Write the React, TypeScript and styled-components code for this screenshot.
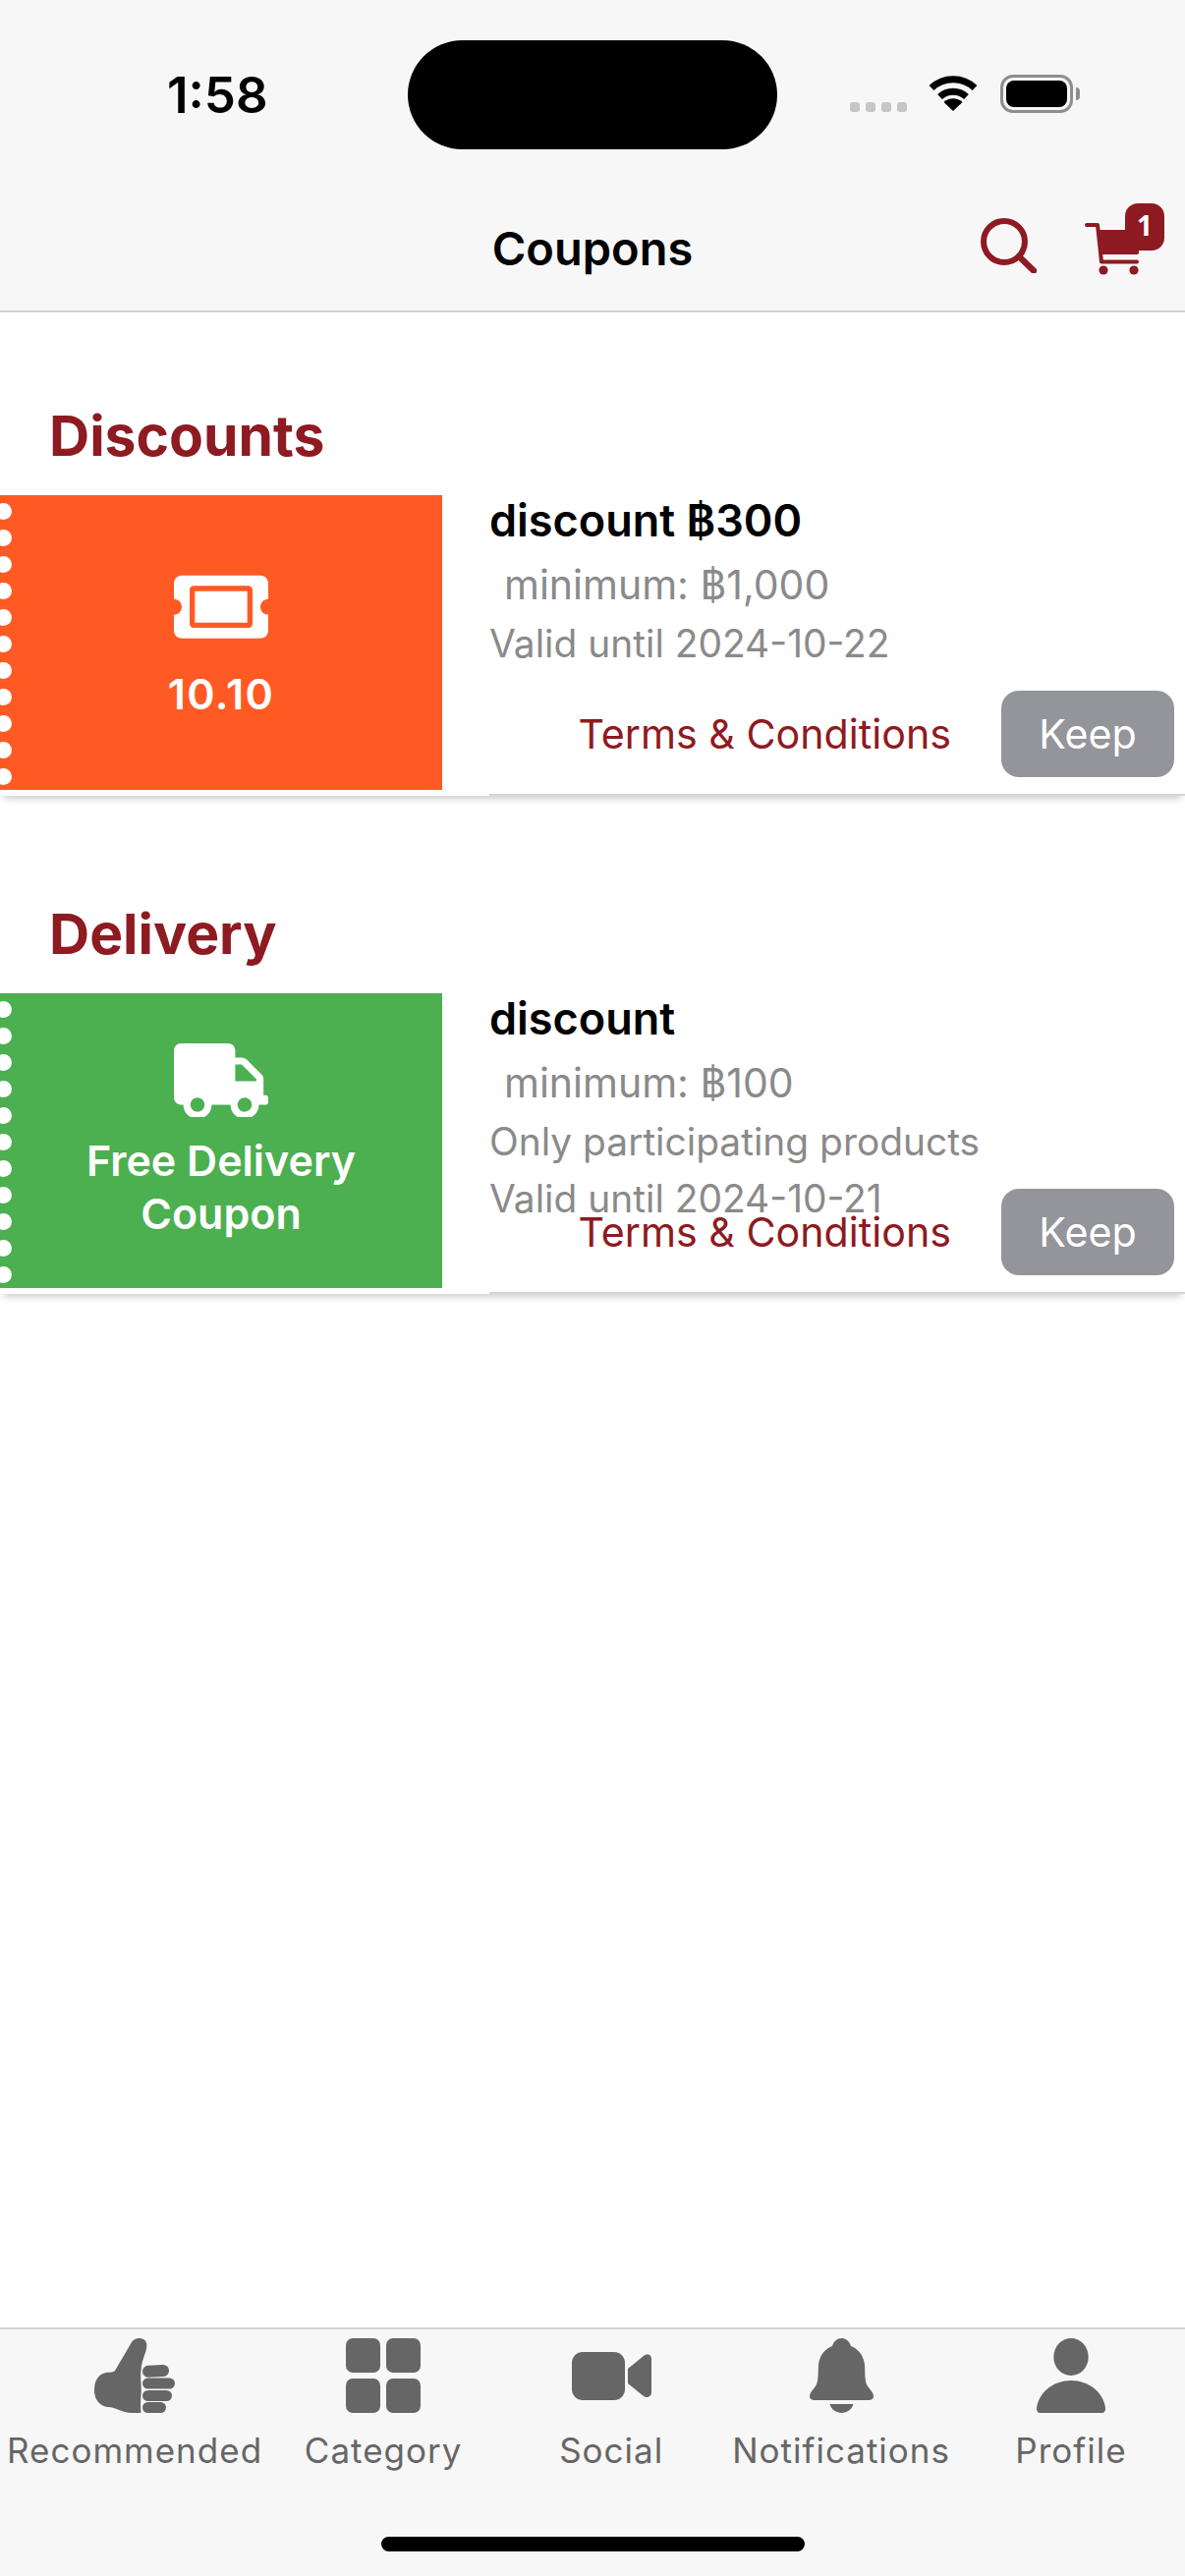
import React from "react";
import styled, { createGlobalStyle } from "styled-components";
import { FaTicketAlt, FaTruck } from "react-icons/fa";

const RED = "#8e1a22";
const GREY = "#8a8a8a";
const ICON = "#666666";

const GlobalStyle = createGlobalStyle`
	html, body {
		margin: 0;
		padding: 0;
		background: #ffffff;
		font-family: Inter, "Liberation Sans", sans-serif;
	}
	* {
		box-sizing: border-box;
	}
`;

const Page = styled.div`
	width: 1206px;
	height: 2622px;
	display: flex;
	flex-direction: column;
	overflow: hidden;
`;

const Header = styled.header`
	background: #f7f7f7;
	border-bottom: 2px solid #d2d2d2;
	height: 318px;
`;

const StatusBar = styled.div`
	height: 190px;
	display: grid;
	grid-template-columns: 415px 376px 415px;
	padding-top: 41px;
`;

const Time = styled.div`
	padding-left: 170px;
	padding-top: 26px;
	font-size: 51px;
	line-height: 60px;
	font-weight: 600;
	color: #000;
`;

const Island = styled.div`
	height: 111px;
	background: #000;
	border-radius: 56px;
`;

const StatusIcons = styled.div`
	display: flex;
	align-items: flex-start;
	padding: 35px 0 0 74px;
`;

const SignalDots = styled.div`
	display: flex;
	gap: 6px;
	margin: 28px 22px 0 0;
`;

const SignalDot = styled.span`
	width: 10px;
	height: 10px;
	border-radius: 3px;
	background: #c6c6c6;
`;

const Battery = styled.div`
	position: relative;
	width: 74px;
	height: 39px;
	margin-left: 23px;
	padding: 3px;
	border: 3px solid #8e8e8e;
	border-radius: 13px;
	&::before {
		content: "";
		display: block;
		height: 27px;
		background: #000;
		border-radius: 8px;
	}
	&::after {
		content: "";
		position: absolute;
		right: -10px;
		top: 10px;
		width: 4px;
		height: 13px;
		background: #8e8e8e;
		border-radius: 0 4px 4px 0;
	}
`;

const NavBar = styled.div`
	height: 126px;
	display: grid;
	grid-template-columns: 1fr auto 1fr;
`;

const NavTitle = styled.div`
	grid-column: 2;
	padding-top: 34px;
	font-size: 47px;
	line-height: 58px;
	font-weight: 600;
	color: #000;
`;

const NavActions = styled.div`
	display: flex;
	justify-content: flex-end;
	padding: 32px 47px 0 0;
	gap: 49px;
`;

const CartButton = styled.div`
	position: relative;
	width: 55px;
	height: 53px;
	margin-top: 5px;
`;

const CartBadge = styled.span`
	position: absolute;
	left: 41px;
	top: -20px;
	width: 40px;
	height: 48px;
	border-radius: 13px;
	background: ${RED};
	color: #fff;
	font-family: "Open Sans", sans-serif;
	font-size: 28px;
	font-weight: 700;
	line-height: 44px;
	text-align: center;
`;

const Content = styled.main`
	flex: 1;
	display: flex;
	flex-direction: column;
	gap: 106px;
	padding-top: 91px;
	background: #fff;
`;

const SectionTitle = styled.h2`
	margin: 0 0 19px 50px;
	font-size: 57px;
	line-height: 70px;
	font-weight: 700;
	color: ${RED};
`;

const Card = styled.div`
	position: relative;
	height: 312px;
	display: flex;
	background: #fff;
	box-shadow: 0 7px 7px -4px rgba(0, 0, 0, 0.2);
`;

const Tile = styled.div<{ $color: string; $top: number; $gap: number }>`
	position: relative;
	flex: none;
	width: 450px;
	height: 300px;
	margin: 6px 48px 6px 0;
	padding-top: ${(p) => p.$top}px;
	overflow: hidden;
	display: flex;
	flex-direction: column;
	align-items: center;
	gap: ${(p) => p.$gap}px;
	background: ${(p) => p.$color};
	color: #fff;
`;

const Perforation = styled.div`
	position: absolute;
	left: -5px;
	top: 8px;
	display: flex;
	flex-direction: column;
	gap: 10px;
`;

const Hole = styled.span`
	width: 17px;
	height: 17px;
	border-radius: 50%;
	background: #fff;
`;

const TileIcon = styled.div<{ $glyphHeight: number }>`
	width: 96px;
	height: 75px;
	overflow: hidden;
	flex: none;
	svg {
		display: block;
		width: 96px;
		height: ${(p) => p.$glyphHeight}px;
	}
`;

const TileLabel = styled.div<{ $spacing: number }>`
	width: 340px;
	font-size: 43px;
	line-height: 54px;
	font-weight: 600;
	text-align: center;
	letter-spacing: ${(p) => p.$spacing}px;
`;

const CardBody = styled.div`
	flex: 1;
	padding-top: 1px;
	border-bottom: 2px solid #d4d4d4;
`;

const CouponTitle = styled.div`
	margin-bottom: 5px;
	font-size: 45px;
	line-height: 61px;
	font-weight: 600;
	color: #000;
`;

const CouponMinimum = styled.div`
	padding-left: 15px;
	font-size: 41px;
	line-height: 61px;
	color: ${GREY};
`;

const CouponNote = styled.div`
	font-size: 38.9px;
	line-height: 58px;
	color: ${GREY};
`;

const CardActions = styled.div`
	position: absolute;
	right: 11px;
	bottom: 19px;
	display: flex;
	align-items: center;
	gap: 51px;
`;

const TermsLink = styled.span`
	font-size: 41.2px;
	line-height: 50px;
	color: ${RED};
`;

const KeepButton = styled.button`
	width: 176px;
	height: 88px;
	border: 0;
	border-radius: 18px;
	background: #93959b;
	color: #fff;
	font-family: inherit;
	font-size: 41.2px;
	padding: 0;
`;

const TabBar = styled.nav`
	height: 253px;
	background: #f7f7f7;
	border-top: 2px solid #d2d2d2;
	display: flex;
	flex-direction: column;
`;

const TabRow = styled.div`
	display: flex;
`;

const Tab = styled.div`
	flex: 1 1 0;
	padding: 9px 7px 0;
	display: flex;
	flex-direction: column;
	align-items: center;
	color: ${ICON};
`;

const TabIcon = styled.div`
	height: 76px;
	display: flex;
	align-items: center;
	justify-content: center;
	margin-bottom: 17px;
`;

const TabLabel = styled.span`
	font-size: 35px;
	line-height: 42px;
	font-weight: 400;
	white-space: nowrap;
	letter-spacing: 1px;
`;

const CategoryGrid = styled.div`
	display: grid;
	grid-template-columns: 35px 35px;
	grid-template-rows: 35px 35px;
	gap: 6px;
`;

const CategoryCell = styled.span`
	background: ${ICON};
	border-radius: 7px;
`;

const HomeBar = styled.div`
	width: 431px;
	height: 15px;
	margin: 67px auto 0;
	border-radius: 8px;
	background: #000;
`;

const WifiIcon = () => (
	<svg width='50' height='37' viewBox='0 0 50 37' fill='none' stroke='#000'>
		<path d='M3 13.5 A32 32 0 0 1 47 13.5' strokeWidth='7' />
		<path d='M11.5 22.5 A20 20 0 0 1 38.5 22.5' strokeWidth='7' />
		<path d='M25 37 L15.5 28 A14 14 0 0 1 34.5 28 Z' fill='#000' stroke='none' />
	</svg>
);

const SearchIcon = () => (
	<svg width='57' height='56' viewBox='0 0 57 56' fill='none' stroke={RED} strokeWidth='6'>
		<circle cx='24' cy='24' r='21' />
		<path d='M39 39 L54 53.5' strokeLinecap='round' strokeWidth='6.5' />
	</svg>
);

const CartIcon = () => (
	<svg width='55' height='53' viewBox='0 0 55 53' fill='none'>
		<path d='M2 2 H13 L17 39.5 H53' stroke={RED} strokeWidth='4' strokeLinecap='round' strokeLinejoin='round' />
		<path d='M13 7 H55 V30 a2 2 0 0 1 -2 2 H16 Z' fill={RED} />
		<circle cx='19' cy='48' r='4.6' fill={RED} />
		<circle cx='50' cy='48' r='4.6' fill={RED} />
	</svg>
);

const ThumbIcon = () => (
	<svg width='82' height='76' viewBox='0 0 82 76' fill={ICON}>
		<path d='M38 4 C41 -1 48 -1 51.5 2 C54 5 53.5 9 52.5 13 C50 20 47.5 27 47.5 33 C46.5 42 48.5 50 47.5 58 C47 65 47 71 47.5 76 H37 C31 76 24 72 18 70.5 C13 70 9 70 5 66 C1 62 0 57 0 52 C0 44 4 36 12 35 C15 34.5 19 35 21 33 Z' />
		<rect x='49' y='27.5' width='27' height='12' rx='6' transform='rotate(-3 62 33)' />
		<rect x='49' y='40.5' width='33' height='11' rx='5.5' />
		<rect x='49' y='53' width='30' height='11' rx='5.5' />
		<rect x='49' y='65' width='24' height='11' rx='5.5' />
	</svg>
);

const VideoIcon = () => (
	<svg width='81' height='49' viewBox='0 0 81 49' fill={ICON}>
		<rect x='0' y='0' width='54' height='49' rx='11' />
		<path d='M57 17 L73 4 C76 1.5 81 2 81 7 V41 C81 46 76 47 73 45 L57 32 Z' />
	</svg>
);

const BellIcon = () => (
	<svg width='65' height='76' viewBox='0 0 65 76' fill={ICON}>
		<path d='M32.5 0 C37 0 40.5 3 42 8 C50 11 55 18 56 27 C56.5 36 56 42 58 47 C60 51 65 55 65 59 C65 61.5 63 63 60 63 H5 C2 63 0 61.5 0 59 C0 55 5 51 7 47 C9 42 8.5 36 9 27 C10 18 15 11 23 8 C24.5 3 28 0 32.5 0 Z' />
		<path d='M20.5 67 H44.5 C43 72.5 38 76 32.5 76 C27 76 22 72.5 20.5 67 Z' />
	</svg>
);

const PersonIcon = () => (
	<svg width='70' height='76' viewBox='0 0 70 76' fill={ICON}>
		<ellipse cx='35' cy='19' rx='17.7' ry='19' />
		<path d='M4 76 H66 C69 76 70 74 70 71 C68 55 53 43 35 43 C17 43 2 55 0 71 C0 74 1 76 4 76 Z' />
	</svg>
);

const CategoryIcon = () => (
	<CategoryGrid>
		<CategoryCell />
		<CategoryCell />
		<CategoryCell />
		<CategoryCell />
	</CategoryGrid>
);

const tabs = [
	{ label: "Recommended", icon: <ThumbIcon /> },
	{ label: "Category", icon: <CategoryIcon /> },
	{ label: "Social", icon: <VideoIcon /> },
	{ label: "Notifications", icon: <BellIcon /> },
	{ label: "Profile", icon: <PersonIcon /> },
];

type Coupon = {
	heading: string;
	color: string;
	top: number;
	gap: number;
	icon: React.ReactNode;
	glyphHeight: number;
	label: string;
	labelSpacing: number;
	title: string;
	minimum: string;
	notes: string[];
};

const coupons: Coupon[] = [
	{
		heading: "Discounts",
		color: "#ff5a24",
		top: 71,
		gap: 29,
		icon: <FaTicketAlt />,
		glyphHeight: 85.33,
		label: "10.10",
		labelSpacing: 1.3,
		title: "discount ฿300",
		minimum: "minimum: ฿1,000",
		notes: ["Valid until 2024-10-22"],
	},
	{
		heading: "Delivery",
		color: "#4caf50",
		top: 51,
		gap: 17,
		icon: <FaTruck />,
		glyphHeight: 76.8,
		label: "Free Delivery Coupon",
		labelSpacing: 0,
		title: "discount",
		minimum: "minimum: ฿100",
		notes: ["Only participating products", "Valid until 2024-10-21"],
	},
];

const App: React.FC = () => {
	return (
		<Page>
			<GlobalStyle />
			<Header>
				<StatusBar>
					<Time>1:58</Time>
					<Island />
					<StatusIcons>
						<SignalDots>
							<SignalDot />
							<SignalDot />
							<SignalDot />
							<SignalDot />
						</SignalDots>
						<WifiIcon />
						<Battery />
					</StatusIcons>
				</StatusBar>
				<NavBar>
					<NavTitle>Coupons</NavTitle>
					<NavActions>
						<SearchIcon />
						<CartButton>
							<CartIcon />
							<CartBadge>1</CartBadge>
						</CartButton>
					</NavActions>
				</NavBar>
			</Header>
			<Content>
				{coupons.map((c) => (
					<section key={c.heading}>
						<SectionTitle>{c.heading}</SectionTitle>
						<Card>
							<Tile $color={c.color} $top={c.top} $gap={c.gap}>
								<Perforation>
									{Array.from({ length: 11 }).map((_, i) => (
										<Hole key={i} />
									))}
								</Perforation>
								<TileIcon $glyphHeight={c.glyphHeight}>{c.icon}</TileIcon>
								<TileLabel $spacing={c.labelSpacing}>{c.label}</TileLabel>
							</Tile>
							<CardBody>
								<CouponTitle>{c.title}</CouponTitle>
								<CouponMinimum>{c.minimum}</CouponMinimum>
								{c.notes.map((n) => (
									<CouponNote key={n}>{n}</CouponNote>
								))}
							</CardBody>
							<CardActions>
								<TermsLink>Terms &amp; Conditions</TermsLink>
								<KeepButton>Keep</KeepButton>
							</CardActions>
						</Card>
					</section>
				))}
			</Content>
			<TabBar>
				<TabRow>
					{tabs.map((t) => (
						<Tab key={t.label}>
							<TabIcon>{t.icon}</TabIcon>
							<TabLabel>{t.label}</TabLabel>
						</Tab>
					))}
				</TabRow>
				<HomeBar />
			</TabBar>
		</Page>
	);
};

export default App;
